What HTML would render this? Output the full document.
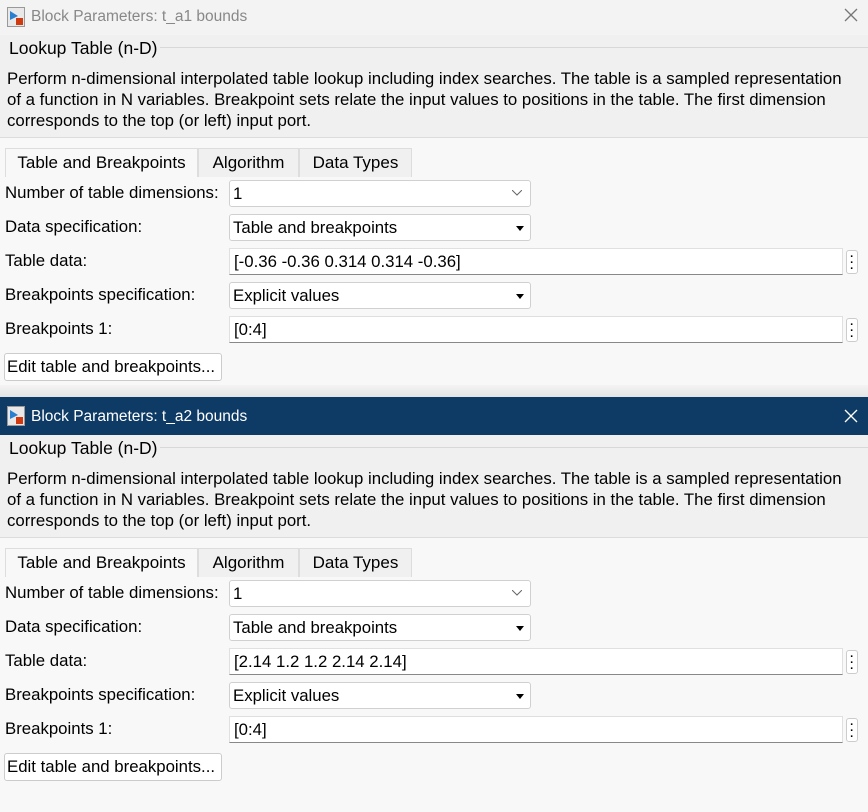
<!DOCTYPE html><html><head><style>
*{margin:0;padding:0;box-sizing:border-box}
body{width:868px;height:812px;overflow:hidden;background:#f8f8f8;font-family:"Liberation Sans",Arial,sans-serif;font-size:16.8px;color:#000;position:relative}
.d{position:absolute;left:0;width:868px;height:400px}
.a{position:absolute;white-space:nowrap}
.tb{left:0;top:0;width:868px;height:35px;background:#f3f3f3}
.hd{left:0;top:35px;width:868px;height:103px;background:#f0f0f0;border-bottom:1px solid #dcdcdc}
.gl{top:47px;left:160px;right:0;height:1px;background:#d8d8d8}
.ic{left:7px;top:7px;width:18px;height:20px;background:#e8e8e8;border:1px solid #999}
.tab{top:148px;height:29px;border:1px solid #ddd;border-bottom:none;background:#f0f0f0;text-align:center;line-height:27px;font-size:17px}
.cb{height:27px;background:#fff;border:1px solid #d0d0d0;border-radius:3px;padding-left:3px;line-height:25px}
.ed{height:27px;background:#fff;border:1px solid #e0e0e0;border-bottom:1px solid #888;padding-left:4px;line-height:25px}
.dots{width:12px;height:24px;border:1px solid #ccc;border-radius:3px;background:#fff;font-weight:bold;font-size:11px;line-height:6px;text-align:center;padding-top:3px}
.tri{width:0;height:0;border-left:4px solid transparent;border-right:4px solid transparent;border-top:5px solid #000}
.btn{left:4px;top:353px;width:218px;height:28px;border:1px solid #ccc;border-radius:3px;background:#fff;line-height:26px;padding-left:2px}
.l{left:5px}
.chev{right:8px;top:9px}
</style></head><body>

<div class="d" style="top:0">
<div class="a tb"></div>
<div class="a ic"><svg width="16" height="18"><path d="M2 3 L10 8 L2 12Z" fill="#2a7fd0"/><rect x="8" y="10" width="7" height="7" fill="#d03a10"/></svg></div>
<div class="a" style="left:31px;top:8px;font-size:15.5px;color:#888">Block Parameters: t_a1 bounds</div>
<svg class="a" style="left:844px;top:8px" width="14" height="14"><path d="M1 1L13 13M13 1L1 13" stroke="#777" stroke-width="1.3"/></svg>
<div class="a hd"></div><div class="a gl"></div>
<div class="a" style="left:9px;top:38px;font-size:17.5px">Lookup Table (n-D)</div>
<div class="a" style="left:7px;top:68px;line-height:21px">Perform n-dimensional interpolated table lookup including index searches. The table is a sampled representation<br>of a function in N variables. Breakpoint sets relate the input values to positions in the table. The first dimension<br>corresponds to the top (or left) input port.</div>
<div class="a tab" style="left:5px;width:193px;background:#f8f8f8">Table and Breakpoints</div>
<div class="a tab" style="left:198px;width:101px">Algorithm</div>
<div class="a tab" style="left:299px;width:113px">Data Types</div>
<div class="a l" style="top:183px">Number of table dimensions:</div>
<div class="a cb" style="left:229px;top:180px;width:302px">1<svg class="a chev" width="10" height="6"><path d="M0 0L5 5L10 0" stroke="#666" fill="none"/></svg></div>
<div class="a l" style="top:217px">Data specification:</div>
<div class="a cb" style="left:229px;top:214px;width:302px">Table and breakpoints<div class="a tri" style="right:6px;top:11px"></div></div>
<div class="a l" style="top:251px">Table data:</div>
<div class="a ed" style="left:229px;top:248px;width:614px">[-0.36 -0.36 0.314 0.314 -0.36]</div>
<div class="a dots" style="left:846px;top:250px">·<br>·<br>·</div>
<div class="a l" style="top:285px">Breakpoints specification:</div>
<div class="a cb" style="left:229px;top:282px;width:302px">Explicit values<div class="a tri" style="right:6px;top:11px"></div></div>
<div class="a l" style="top:319px">Breakpoints 1:</div>
<div class="a ed" style="left:229px;top:316px;width:614px">[0:4]</div>
<div class="a dots" style="left:846px;top:318px">·<br>·<br>·</div>
<div class="a btn">Edit table and breakpoints...</div>
<div class="a" style="left:0;top:385px;width:868px;height:12px;background:linear-gradient(#f4f4f4,#e4e4e4)"></div>
</div>

<div class="d" style="top:397px;height:415px">
<div class="a tb" style="height:38px;background:#0e3a66"></div>
<div class="a ic" style="top:9px"><svg width="16" height="18"><path d="M2 3 L10 8 L2 12Z" fill="#2a7fd0"/><rect x="8" y="10" width="7" height="7" fill="#d03a10"/></svg></div>
<div class="a" style="left:31px;top:11px;font-size:15.5px;color:#fff">Block Parameters: t_a2 bounds</div>
<svg class="a" style="left:844px;top:12px" width="14" height="14"><path d="M1 1L13 13M13 1L1 13" stroke="#fff" stroke-width="1.3"/></svg>
</div>

<div class="d" style="top:400px">
<div class="a hd"></div><div class="a gl"></div>
<div class="a" style="left:9px;top:38px;font-size:17.5px">Lookup Table (n-D)</div>
<div class="a" style="left:7px;top:68px;line-height:21px">Perform n-dimensional interpolated table lookup including index searches. The table is a sampled representation<br>of a function in N variables. Breakpoint sets relate the input values to positions in the table. The first dimension<br>corresponds to the top (or left) input port.</div>
<div class="a tab" style="left:5px;width:193px;background:#f8f8f8">Table and Breakpoints</div>
<div class="a tab" style="left:198px;width:101px">Algorithm</div>
<div class="a tab" style="left:299px;width:113px">Data Types</div>
<div class="a l" style="top:183px">Number of table dimensions:</div>
<div class="a cb" style="left:229px;top:180px;width:302px">1<svg class="a chev" width="10" height="6"><path d="M0 0L5 5L10 0" stroke="#666" fill="none"/></svg></div>
<div class="a l" style="top:217px">Data specification:</div>
<div class="a cb" style="left:229px;top:214px;width:302px">Table and breakpoints<div class="a tri" style="right:6px;top:11px"></div></div>
<div class="a l" style="top:251px">Table data:</div>
<div class="a ed" style="left:229px;top:248px;width:614px">[2.14 1.2 1.2 2.14 2.14]</div>
<div class="a dots" style="left:846px;top:250px">·<br>·<br>·</div>
<div class="a l" style="top:285px">Breakpoints specification:</div>
<div class="a cb" style="left:229px;top:282px;width:302px">Explicit values<div class="a tri" style="right:6px;top:11px"></div></div>
<div class="a l" style="top:319px">Breakpoints 1:</div>
<div class="a ed" style="left:229px;top:316px;width:614px">[0:4]</div>
<div class="a dots" style="left:846px;top:318px">·<br>·<br>·</div>
<div class="a btn">Edit table and breakpoints...</div>
</div>
</body></html>
